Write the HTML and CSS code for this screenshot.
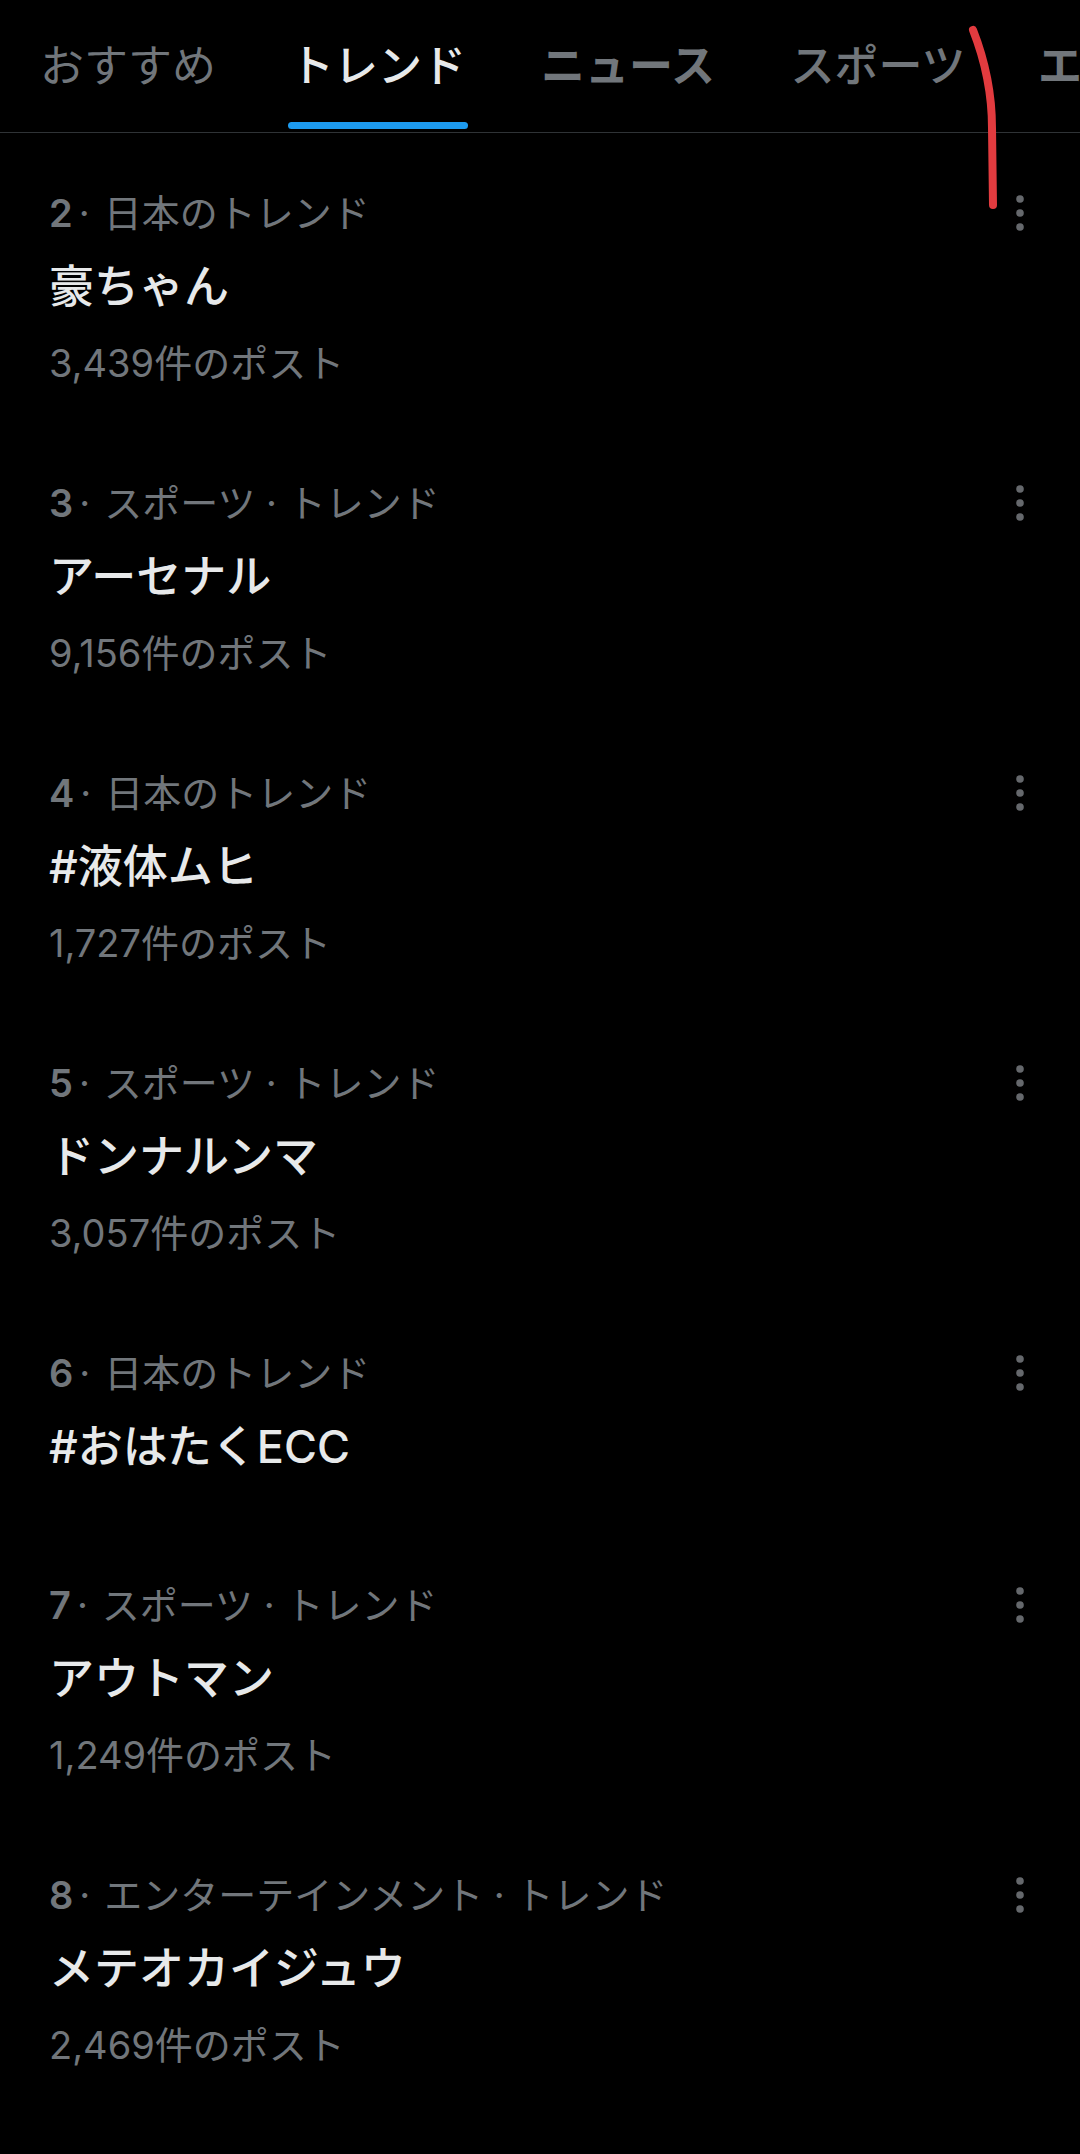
FILE: index.html
```html
<!DOCTYPE html>
<html lang="ja">
<head>
<meta charset="utf-8">
<title>トレンド</title>
<link rel="stylesheet" href="styles.css">
</head>
<body>
<div class="screen">
  <nav class="tabs">
    <div class="tab tab-light"><span class="tab-label">おすすめ</span><span class="tab-bar"></span></div>
    <div class="tab tab-active"><span class="tab-label">トレンド</span><span class="tab-bar"></span></div>
    <div class="tab tab-bold"><span class="tab-label">ニュース</span><span class="tab-bar"></span></div>
    <div class="tab"><span class="tab-label">スポーツ</span><span class="tab-bar"></span></div>
    <div class="tab tab-bold"><span class="tab-label">エンターテイメント</span><span class="tab-bar"></span></div>
  </nav>

  <ul class="trends">
    <li class="trend">
      <div class="trend-body">
        <div class="trend-meta"><b class="rank">2</b><span class="sep">·</span>日本のトレンド</div>
        <div class="trend-title">豪ちゃん</div>
        <div class="trend-posts">3,439件のポスト</div>
      </div>
      <span class="more"><svg width="8" height="36" viewBox="0 0 8 36"><circle cx="4" cy="4" r="3.8"/><circle cx="4" cy="18" r="3.8"/><circle cx="4" cy="32" r="3.8"/></svg></span>
    </li>
    <li class="trend">
      <div class="trend-body">
        <div class="trend-meta"><b class="rank">3</b><span class="sep">·</span>スポーツ · トレンド</div>
        <div class="trend-title">アーセナル</div>
        <div class="trend-posts">9,156件のポスト</div>
      </div>
      <span class="more"><svg width="8" height="36" viewBox="0 0 8 36"><circle cx="4" cy="4" r="3.8"/><circle cx="4" cy="18" r="3.8"/><circle cx="4" cy="32" r="3.8"/></svg></span>
    </li>
    <li class="trend">
      <div class="trend-body">
        <div class="trend-meta"><b class="rank">4</b><span class="sep">·</span>日本のトレンド</div>
        <div class="trend-title">#液体ムヒ</div>
        <div class="trend-posts">1,727件のポスト</div>
      </div>
      <span class="more"><svg width="8" height="36" viewBox="0 0 8 36"><circle cx="4" cy="4" r="3.8"/><circle cx="4" cy="18" r="3.8"/><circle cx="4" cy="32" r="3.8"/></svg></span>
    </li>
    <li class="trend">
      <div class="trend-body">
        <div class="trend-meta"><b class="rank">5</b><span class="sep">·</span>スポーツ · トレンド</div>
        <div class="trend-title">ドンナルンマ</div>
        <div class="trend-posts">3,057件のポスト</div>
      </div>
      <span class="more"><svg width="8" height="36" viewBox="0 0 8 36"><circle cx="4" cy="4" r="3.8"/><circle cx="4" cy="18" r="3.8"/><circle cx="4" cy="32" r="3.8"/></svg></span>
    </li>
    <li class="trend trend-noposts">
      <div class="trend-body">
        <div class="trend-meta"><b class="rank">6</b><span class="sep">·</span>日本のトレンド</div>
        <div class="trend-title">#おはたくECC</div>
      </div>
      <span class="more"><svg width="8" height="36" viewBox="0 0 8 36"><circle cx="4" cy="4" r="3.8"/><circle cx="4" cy="18" r="3.8"/><circle cx="4" cy="32" r="3.8"/></svg></span>
    </li>
    <li class="trend">
      <div class="trend-body">
        <div class="trend-meta"><b class="rank">7</b><span class="sep">·</span>スポーツ · トレンド</div>
        <div class="trend-title">アウトマン</div>
        <div class="trend-posts">1,249件のポスト</div>
      </div>
      <span class="more"><svg width="8" height="36" viewBox="0 0 8 36"><circle cx="4" cy="4" r="3.8"/><circle cx="4" cy="18" r="3.8"/><circle cx="4" cy="32" r="3.8"/></svg></span>
    </li>
    <li class="trend">
      <div class="trend-body">
        <div class="trend-meta"><b class="rank">8</b><span class="sep">·</span>エンターテインメント · トレンド</div>
        <div class="trend-title">メテオカイジュウ</div>
        <div class="trend-posts">2,469件のポスト</div>
      </div>
      <span class="more"><svg width="8" height="36" viewBox="0 0 8 36"><circle cx="4" cy="4" r="3.8"/><circle cx="4" cy="18" r="3.8"/><circle cx="4" cy="32" r="3.8"/></svg></span>
    </li>
  </ul>

  <svg class="annotation" width="40" height="220" viewBox="960 20 40 220">
    <path d="M973 30 C 984 58, 992 88, 992 128 L 993 205" fill="none" stroke="#e23b3f" stroke-width="8" stroke-linecap="round"/>
  </svg>
</div>
</body>
</html>
```

FILE: styles.css
```css
* { box-sizing: border-box; }

html, body {
  margin: 0;
  padding: 0;
  background: #000;
}

body {
  font-family: "Inter", "Noto Sans CJK JP", sans-serif;
  color: #e7e9ea;
}

.screen {
  position: relative;
  width: 1080px;
  height: 2154px;
  overflow: hidden;
  background: #000;
}

/* Tabs */
.tabs {
  display: flex;
  height: 133px;
  padding-left: 3px;
  border-bottom: 1px solid #2f3336;
  overflow: hidden;
  white-space: nowrap;
}

.tab {
  flex: none;
  display: flex;
  flex-direction: column;
  align-items: center;
  padding: 40px 35px 0;
  color: #71767b;
  font-family: "Noto Sans CJK JP", sans-serif;
  font-size: 44px;
  font-weight: 500;
}

.tab-label {
  line-height: 46px;
  height: 46px;
}

.tab-light { font-weight: 400; }
.tab-bold { font-weight: 700; }

.tab-active {
  color: #e7e9ea;
  font-weight: 500;
}

.tab-bar {
  width: 180px;
  height: 7px;
  margin-top: 36px;
  border-radius: 4px;
  background: transparent;
}

.tab-active .tab-bar { background: #1d9bf0; }

/* Trends */
.trends {
  list-style: none;
  margin: 0;
  padding: 10px 0 0;
}

.trend {
  display: flex;
  align-items: flex-start;
  padding: 45px 56px 45px 49px;
}

.trend-noposts { padding-bottom: 59px; }

.trend-body {
  flex: 1;
  min-width: 0;
}

.trend-meta {
  font-size: 38px;
  line-height: 50px;
  color: #71767b;
}

.rank { font-weight: 600; }

.sep {
  display: inline-block;
  margin: 0 14px 0 6px;
}

.trend-title {
  margin-top: 20px;
  font-size: 45px;
  line-height: 58px;
  font-weight: 500;
  color: #e7e9ea;
}

.trend-posts {
  margin-top: 22px;
  font-size: 38px;
  line-height: 50px;
  color: #71767b;
}

.more {
  flex: none;
  display: flex;
  align-items: center;
  height: 50px;
}

.more svg { fill: #65686c; display: block; }

.annotation {
  position: absolute;
  left: 960px;
  top: 20px;
}
```
